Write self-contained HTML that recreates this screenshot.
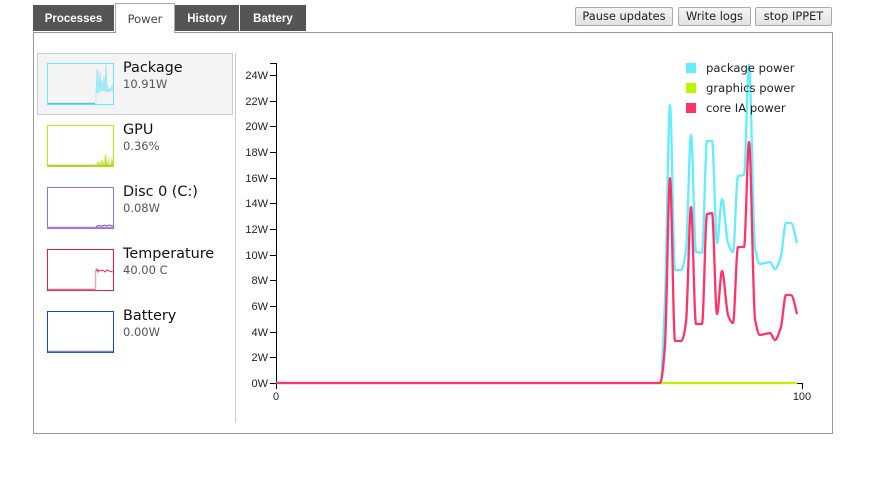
<!DOCTYPE html>
<html><head><meta charset="utf-8"><style>
html,body{margin:0;padding:0;background:#fff}
body{width:884px;height:491px;position:relative;overflow:hidden;font-family:"DejaVu Sans","Liberation Sans",sans-serif}
div{position:absolute;box-sizing:border-box}
.tab{top:5px;height:26px;background:#555;color:#fff;font-weight:bold;text-align:center;line-height:28px;font-family:"Liberation Sans",sans-serif;font-size:11.5px}
.btn{top:7px;height:19px;border:1px solid #aaa;border-radius:2px;background:linear-gradient(#f5f5f5,#e2e2e2);font-size:11.4px;line-height:17px;text-align:center;color:#222;white-space:nowrap}
.n{left:123px;line-height:18px;color:#111;white-space:nowrap;font-size:14.4px}
.v{left:123px;font-size:11.5px;line-height:14px;color:#555;white-space:nowrap}
.lg{left:686px;width:10px;height:10px}
.lt{left:706px;line-height:14px;color:#222;white-space:nowrap;font-size:11.6px}
svg{position:absolute;left:0;top:0}
svg text{font-family:"Liberation Sans",sans-serif;font-size:11px;fill:#222}
</style></head><body>
<div style="left:33px;top:32px;width:800px;height:402px;border:1px solid #999"></div>
<div class="tab" style="left:33px;width:81px">Processes</div>
<div style="left:115px;top:3px;width:60px;height:30px;background:#fff;border:1px solid #aaa;border-bottom:none;text-align:center;font-size:11.5px;line-height:30px;color:#444">Power</div>
<div class="tab" style="left:175px;width:64px">History</div>
<div class="tab" style="left:240px;width:66px">Battery</div>
<div class="btn" style="left:575px;width:98px">Pause updates</div>
<div class="btn" style="left:678px;width:73px">Write logs</div>
<div class="btn" style="left:755px;width:77px">stop IPPET</div>

<div style="left:37px;top:53px;width:196px;height:62px;background:#f4f4f4;border:1px solid #ccc"></div>
<div style="left:235px;top:53px;width:1px;height:370px;background:#ccc"></div>

<svg width="884" height="491" viewBox="0 0 884 491">
<!-- thumbnails -->
<g fill="none" stroke-width="1" shape-rendering="crispEdges">
<rect x="47.500" y="63.500" width="66" height="41" stroke="#64ecff"/>
<rect x="47.500" y="125.500" width="66" height="41" stroke="#b9ef00"/>
<rect x="47.500" y="187.500" width="66" height="41" stroke="#9a6cf0"/>
<rect x="47.500" y="249.500" width="66" height="41" stroke="#e8174f"/>
<rect x="47.500" y="311.500" width="66" height="41" stroke="#0f46e0"/>
</g>
<path d="M48 103.500H95" stroke="#55c8da" stroke-width="1.500" fill="none"/>
<path d="M96 104V90" stroke="#c4f5fb" stroke-width="1.500" fill="none"/>
<path d="M96 90L97 69 98 72 99 89 100 72 101 88 102 80 103 89 104 76 105 89 106 64 107 84 108 90 110 89 112 86 113 88 112 90 108 92 105 91 102 91 99 92 97 93Z" fill="#a6eef9" stroke="#8fe3ef" stroke-width=".6"/>
<path d="M48 165.500H113" stroke="#a9c93a" stroke-width="1.500" fill="none"/>
<path d="M96 165L98 161 100 163 102 159 104 163 105 152 106 163 108 163 109 155 110 165Z" fill="#c8ea55"/>
<path d="M105 165L106 152 107 165ZM111 165L112 156 113 165Z" fill="#b4dc2e"/>
<path d="M48 227.500H113" stroke="#b47cc8" stroke-width="1.500" fill="none"/>
<path d="M96 226.500L99 225.500 102 226 105 225 107 226 109 225 113 226" stroke="#7a5aa8" stroke-width="1" fill="none"/>
<path d="M48 289.500H95" stroke="#e86a8e" stroke-width="1.500" fill="none"/>
<path d="M95.500 290V270" stroke="#f4a0b8" stroke-width="1.500" fill="none"/>
<path d="M96 271L97 269 98 272 99 270 101 271 103 270 105 272 107 270 109 271 113 272" stroke="#d83a66" stroke-width="1" fill="none"/>
<path d="M48 351.500H113" stroke="#7e86b4" stroke-width="1.500" fill="none"/>

<!-- axes -->
<path d="M270 63.500H276.500V383.500H270M276.500 383.500V389M802.500 389V383.500H797" stroke="#000" stroke-width="1" fill="none"/>
<path d="M270 357.500h6M270 332.500h6M270 306.500h6M270 280.500h6M270 255.500h6M270 229.500h6M270 203.500h6M270 178.500h6M270 152.500h6M270 126.500h6M270 101.500h6M270 75.500h6" stroke="#000" stroke-width="1"/>
<g text-anchor="end">
<text x="268" y="387">0W</text><text x="268" y="361">2W</text><text x="268" y="336">4W</text><text x="268" y="310">6W</text><text x="268" y="284">8W</text><text x="268" y="259">10W</text><text x="268" y="233">12W</text><text x="268" y="207">14W</text><text x="268" y="182">16W</text><text x="268" y="156">18W</text><text x="268" y="130">20W</text><text x="268" y="105">22W</text><text x="268" y="79">24W</text>
</g>
<text x="276" y="400" text-anchor="middle">0</text>
<text x="802" y="400" text-anchor="middle">100</text>

<!-- chart lines -->
<path d="M276 383H660C661.700 383 663.300 338 665 300C666.700 262 668.300 105 670 105C671.700 105 673.300 270 675 270L681 270C682.700 270 684.300 262 686 250C687.700 238 689.300 135 691 135C692.700 135 694.300 252 696 252L702 253C703.700 253 705.300 141 707 141L712 141C713.700 141 715.300 243 717 243C718.700 243 720.300 199 722 199C724 199 726 237 728 243C729.700 248 731.300 252 733 252C734.700 252 736.300 176 738 176L744 175C745.700 175 747.300 65 749 65C751 65 753 237 755 248C756.700 257 758.300 264 760 264L770 262C771.700 262 773.300 269 775 269C777 269 779 263 781 256C782.700 250 784.300 223 786 223L791 223C793 223 795 235 797 243" fill="none" stroke="#64ecff" stroke-width="2.300" stroke-linejoin="round"/>
<path d="M660 383H797" fill="none" stroke="#bbf500" stroke-width="2.300"/>
<path d="M276 383H660C661.700 383 663.300 368 665 345C666.700 322 668.300 178 670 178C671.700 178 673.300 341 675 341L681 341C682.700 341 684.300 335 686 322C687.700 309 689.300 207 691 207C692.700 207 694.300 324 696 324L702 324C703.700 324 705.300 214 707 214L712 213C713.700 213 715.300 314 717 314C718.700 314 720.300 271 722 271C724 271 726 308 728 315C729.700 320 731.300 323 733 323C734.700 323 736.300 247 738 247L744 247C745.700 247 747.300 142 749 142C751 142 753 305 755 319C756.700 328 758.300 335 760 335L770 333C771.700 333 773.300 340 775 340C777 340 779 333 781 327C782.700 320 784.300 295 786 295L791 295C793 295 795 306 797 314" fill="none" stroke="#ff3366" stroke-width="2.300" stroke-linejoin="round"/>
</svg>

<div class="n" style="top:59px">Package</div><div class="v" style="top:77px">10.91W</div>
<div class="n" style="top:121px">GPU</div><div class="v" style="top:139px">0.36%</div>
<div class="n" style="top:183px">Disc 0 (C:)</div><div class="v" style="top:201px">0.08W</div>
<div class="n" style="top:245px">Temperature</div><div class="v" style="top:263px">40.00 C</div>
<div class="n" style="top:307px">Battery</div><div class="v" style="top:325px">0.00W</div>

<div class="lg" style="top:63px;background:#64ecff"></div>
<div class="lg" style="top:83px;background:#bbf500"></div>
<div class="lg" style="top:103px;background:#ff3366"></div>
<div class="lt" style="top:61px">package power</div>
<div class="lt" style="top:81px">graphics power</div>
<div class="lt" style="top:101px">core IA power</div>
</body></html>
